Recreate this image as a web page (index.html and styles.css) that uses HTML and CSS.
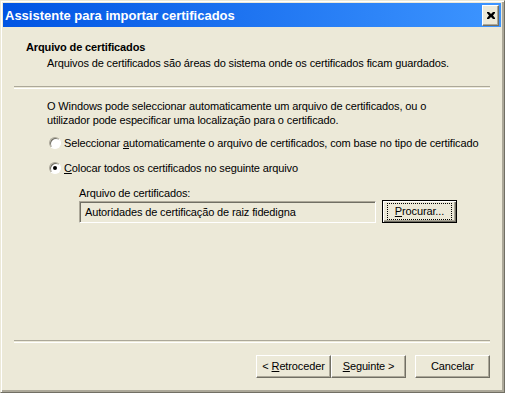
FILE: index.html
```html
<!DOCTYPE html>
<html lang="pt">
<head>
    <meta charset="UTF-8">
    <title>Assistente para importar certificados</title>
    <link rel="stylesheet" href="styles.css">
</head>
<body>

    <div class="window">
        <div class="titlebar">
            <span class="title">Assistente para importar certificados</span>
            <button class="close" aria-label="Fechar">
                <svg width="8" height="7" viewBox="0 0 8 7">
                    <path d="M0 0h2l2 2 2-2h2v1L6 3.5 8 6v1H6L4 5 2 7H0V6l2-2.5L0 1z" fill="#000"/>
                </svg>
            </button>
        </div>

        <div class="header">
            <div class="header-title">Arquivo de certificados</div>
            <div class="header-sub">Arquivos de certificados são áreas do sistema onde os certificados ficam guardados.</div>
        </div>
        <div class="separator"></div>

        <div class="content">
            <p class="intro">O Windows pode seleccionar automaticamente um arquivo de certificados, ou o utilizador pode especificar uma localização para o certificado.</p>

            <div class="radio">
                <span class="radio-box"></span>
                <span>Seleccionar <u>a</u>utomaticamente o arquivo de certificados, com base no tipo de certificado</span>
            </div>
            <div class="radio">
                <span class="radio-box checked"></span>
                <span><u>C</u>olocar todos os certificados no seguinte arquivo</span>
            </div>

            <div class="store">
                <div class="store-label">Arquivo de certificados:</div>
                <div class="store-row">
                    <div class="field">Autoridades de certificação de raiz fidedigna</div>
                    <button class="btn focused"><span class="focus-ring"><u>P</u>rocurar...</span></button>
                </div>
            </div>
        </div>

        <div class="separator"></div>
        <div class="footer">
            <button class="btn">&lt; <u>R</u>etroceder</button>
            <button class="btn"><u>S</u>eguinte &gt;</button>
            <button class="btn cancel">Cancelar</button>
        </div>
    </div>

</body>
</html>
```

FILE: styles.css
```css
body {
    margin: 0;
    padding: 0;
    font-family: 'Liberation Sans', Arial, sans-serif;
    font-size: 11px;
    letter-spacing: -0.13px;
    color: #000;
    background-color: #ece9d8;
}

.window {
    width: 505px;
    height: 393px;
    box-sizing: border-box;
    background-color: #ece9d8;
    border-top: 1px solid #ece9d8;
    border-left: 1px solid #ece9d8;
    border-right: 1px solid #716f64;
    border-bottom: 1px solid #716f64;
    box-shadow: inset 1px 1px #fff, inset -2px -2px #aca899;
    padding: 2px 3px 3px 2px;
    display: flex;
    flex-direction: column;
}

.titlebar {
    height: 24px;
    flex-shrink: 0;
    display: flex;
    align-items: center;
    justify-content: space-between;
    padding: 0 2px;
    background: linear-gradient(to right, #0054e3, #3d95ff);
}

.title {
    color: #fff;
    font-weight: bold;
    font-size: 13px;
    letter-spacing: 0;
}

.close {
    width: 17px;
    height: 21px;
    padding: 0;
    margin: 0;
    background-color: #ece9d8;
    border: 1px solid;
    border-color: #fff #716f64 #716f64 #fff;
    box-shadow: inset -1px -1px #aca899;
    display: flex;
    align-items: center;
    justify-content: center;
}

.header {
    padding: 14px 0 0 23px;
    height: 45px;
}

.header-title {
    font-weight: bold;
}

.header-sub {
    padding: 4px 0 0 21px;
}

.separator {
    margin: 0 11px;
    height: 1px;
    border-top: 1px solid #aca899;
    border-bottom: 1px solid #fff;
    flex-shrink: 0;
}

.content {
    flex: 1;
    padding: 10px 0 0 44px;
}

.intro {
    margin: 0 0 9px;
    width: 420px;
    line-height: 14px;
}

.radio {
    display: flex;
    align-items: center;
    gap: 3px;
    height: 13px;
    margin-bottom: 12px;
    margin-left: 2px;
}

.radio-box {
    width: 12px;
    height: 12px;
    box-sizing: border-box;
    border-radius: 50%;
    background-color: #fff;
    border: 1px solid;
    border-color: #aca899 #fff #fff #aca899;
    box-shadow: inset 1px 1px #716f64;
    position: relative;
}

.radio-box.checked::after {
    content: "";
    position: absolute;
    left: 3px;
    top: 3px;
    width: 4px;
    height: 4px;
    border-radius: 50%;
    background-color: #000;
}

.store {
    padding: 1px 0 0 32px;
}

.store-label {
    margin-bottom: 1px;
}

.store-row {
    display: flex;
    align-items: center;
    gap: 6px;
}

.field {
    width: 297px;
    height: 22px;
    box-sizing: border-box;
    border: 1px solid;
    border-color: #aca899 #fff #fff #aca899;
    box-shadow: inset 1px 1px #716f64;
    padding: 0 5px;
    line-height: 20px;
}

.btn {
    width: 75px;
    height: 23px;
    padding: 0;
    margin: 0;
    font-family: inherit;
    font-size: 11px;
    letter-spacing: inherit;
    color: #000;
    background-color: #ece9d8;
    border: 1px solid;
    border-color: #fff #716f64 #716f64 #fff;
    box-shadow: inset -1px -1px #aca899;
}

.btn.focused {
    border-color: #000;
    box-shadow: inset 1px 1px #fff, inset -1px -1px #716f64, inset -2px -2px #aca899;
}

.focus-ring {
    display: inline-block;
    padding: 1px 2px;
    outline: 1px dotted #000;
    outline-offset: 0;
    line-height: 13px;
    width: 59px;
}

.footer {
    height: 46px;
    flex-shrink: 0;
    display: flex;
    align-items: center;
    justify-content: flex-end;
    padding-right: 11px;
}

.btn.cancel {
    margin-left: 9px;
}
```
